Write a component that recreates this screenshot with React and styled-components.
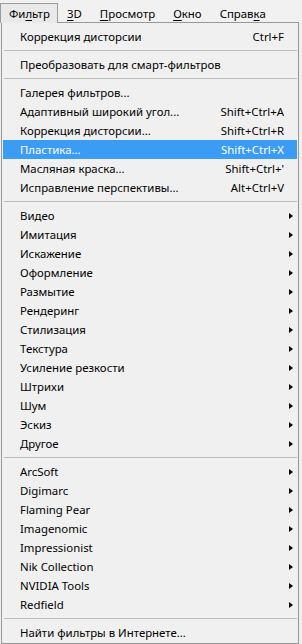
import React from 'react';
import styled, { createGlobalStyle } from 'styled-components';

const GlobalStyle = createGlobalStyle`
  body {
    margin: 0;
    background: #ffffff;
    font-family: "Noto Sans", "Open Sans", sans-serif;
    font-size: 11.4px;
    color: #000;
  }
`

const Page = styled.div`
  width: 302px;
  height: 644px;
  overflow: hidden;
  background: #f0f0f0;
`

const MenuBar = styled.div`
  display: flex;
  align-items: flex-end;
  height: 22px;
  background: #f1f1f1;
`

const BarItem = styled.div`
  display: flex;
  align-items: center;
  height: 18px;
  padding: ${({ active }) => (active ? '0 0 1px 8px' : '0 8px 1px')};
  width: ${({ active }) => (active ? '48px' : 'auto')};
  border: 1px solid ${({ active }) => (active ? '#9c9c9c' : 'transparent')};
  border-bottom: none;
  background: ${({ active }) => (active ? '#e9e9e9' : 'transparent')};
  position: relative;
  z-index: 1;
  margin-bottom: -1px;
  u {
    text-underline-offset: 2px;
  }
`

const Menu = styled.div`
  width: 294px;
  margin-left: 1px;
  height: 615px;
  padding: 4px 1px 1px;
  border: 1px solid #979797;
  background: #f0f0f0;
`

const Row = styled.div`
  display: grid;
  grid-template-columns: 1fr auto 13px;
  align-items: center;
  height: 19px;
  padding-left: 17px;
  background: ${({ selected }) => (selected ? '#3a9cf5' : 'transparent')};
  color: ${({ selected }) => (selected ? '#ffffff' : '#000000')};
  white-space: nowrap;
`

const Shortcut = styled.span`
  text-align: right;
`

const Arrow = styled.span`
  width: 0;
  height: 0;
  margin-left: 5px;
  border-top: 3.5px solid transparent;
  border-bottom: 3.5px solid transparent;
  border-left: 4px solid #000;
`

const Separator = styled.div`
  height: 9px;
  display: flex;
  align-items: center;
  margin-left: 1px;
  &::after {
    content: '';
    display: block;
    width: 100%;
    height: 1px;
    background: #bcbcbc;
    margin-top: -1px;
  }
`

const sections = [
  [{ label: 'Коррекция дисторсии', shortcut: 'Ctrl+F' }],
  [{ label: 'Преобразовать для смарт-фильтров' }],
  [
    { label: 'Галерея фильтров...' },
    { label: 'Адаптивный широкий угол...', shortcut: 'Shift+Ctrl+A' },
    { label: 'Коррекция дисторсии...', shortcut: 'Shift+Ctrl+R' },
    { label: 'Пластика...', shortcut: 'Shift+Ctrl+X', selected: true },
    { label: 'Масляная краска...', shortcut: "Shift+Ctrl+'" },
    { label: 'Исправление перспективы...', shortcut: 'Alt+Ctrl+V' },
  ],
  ['Видео', 'Имитация', 'Искажение', 'Оформление', 'Размытие', 'Рендеринг',
    'Стилизация', 'Текстура', 'Усиление резкости', 'Штрихи', 'Шум', 'Эскиз', 'Другое']
    .map((label) => ({ label, sub: true })),
  ['ArcSoft', 'Digimarc', 'Flaming Pear', 'Imagenomic', 'Impressionist',
    'Nik Collection', 'NVIDIA Tools', 'Redfield']
    .map((label) => ({ label, sub: true })),
  [{ label: 'Найти фильтры в Интернете...' }],
]

const App = () => (
  <Page>
    <GlobalStyle />
    <MenuBar>
      <BarItem active>Фи<u>л</u>ьтр</BarItem>
      <BarItem><u>3</u>D</BarItem>
      <BarItem><u>П</u>росмотр</BarItem>
      <BarItem><u>О</u>кно</BarItem>
      <BarItem>Справ<u>к</u>а</BarItem>
    </MenuBar>
    <Menu>
      {sections.map((items, i) => (
        <React.Fragment key={i}>
          {i > 0 && <Separator />}
          {items.map((item) => (
            <Row key={item.label} selected={item.selected}>
              <span>{item.label}</span>
              <Shortcut>{item.shortcut}</Shortcut>
              {item.sub ? <Arrow /> : <span />}
            </Row>
          ))}
        </React.Fragment>
      ))}
    </Menu>
  </Page>
);

export default App;
